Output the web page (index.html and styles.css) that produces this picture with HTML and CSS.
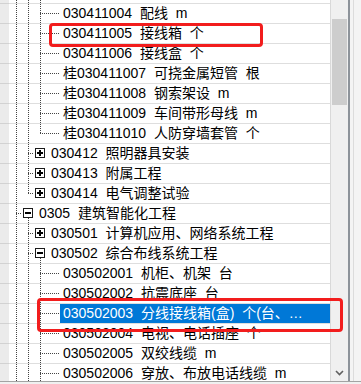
FILE: index.html
```html
<!DOCTYPE html>
<html lang="zh-CN">
<head>
<meta charset="utf-8">
<title>清单树</title>
<link rel="stylesheet" href="styles.css">
</head>
<body>
<div class="frame">
  <div class="tree">
    <div class="list">
      <div class="row"><div class="hdr"></div><div class="cell"><span class="g pipe"></span><span class="g pipe"></span><span class="g tee"></span><span class="n leaf"></span><span class="label"></span></div></div>
      <div class="row"><div class="hdr"></div><div class="cell"><span class="g pipe"></span><span class="g pipe"></span><span class="g tee"></span><span class="n leaf"></span><span class="label">030411004 配线 m</span></div></div>
      <div class="row"><div class="hdr"></div><div class="cell"><span class="g pipe"></span><span class="g pipe"></span><span class="g tee"></span><span class="n leaf"></span><span class="label">030411005 接线箱 个</span></div></div>
      <div class="row"><div class="hdr"></div><div class="cell"><span class="g pipe"></span><span class="g pipe"></span><span class="g tee"></span><span class="n leaf"></span><span class="label">030411006 接线盒 个</span></div></div>
      <div class="row"><div class="hdr"></div><div class="cell"><span class="g pipe"></span><span class="g pipe"></span><span class="g tee"></span><span class="n leaf"></span><span class="label">桂030411007 可挠金属短管 根</span></div></div>
      <div class="row"><div class="hdr"></div><div class="cell"><span class="g pipe"></span><span class="g pipe"></span><span class="g tee"></span><span class="n leaf"></span><span class="label">桂030411008 钢索架设 m</span></div></div>
      <div class="row"><div class="hdr"></div><div class="cell"><span class="g pipe"></span><span class="g pipe"></span><span class="g tee"></span><span class="n leaf"></span><span class="label">桂030411009 车间带形母线 m</span></div></div>
      <div class="row"><div class="hdr"></div><div class="cell"><span class="g pipe"></span><span class="g pipe"></span><span class="g corner"></span><span class="n leaf"></span><span class="label">桂030411010 人防穿墙套管 个</span></div></div>
      <div class="row"><div class="hdr"></div><div class="cell"><span class="g pipe"></span><span class="g tee"></span><span class="n"><svg class="box" viewBox="0 0 10 10" width="10" height="10"><rect x="0.5" y="0.5" width="9" height="9" fill="#fff" stroke="#1a1a1a"/><rect x="2" y="4" width="6" height="2" fill="#000"/><rect x="4" y="2" width="2" height="6" fill="#000"/></svg></span><span class="label">030412 照明器具安装</span></div></div>
      <div class="row"><div class="hdr"></div><div class="cell"><span class="g pipe"></span><span class="g tee"></span><span class="n"><svg class="box" viewBox="0 0 10 10" width="10" height="10"><rect x="0.5" y="0.5" width="9" height="9" fill="#fff" stroke="#1a1a1a"/><rect x="2" y="4" width="6" height="2" fill="#000"/><rect x="4" y="2" width="2" height="6" fill="#000"/></svg></span><span class="label">030413 附属工程</span></div></div>
      <div class="row"><div class="hdr"></div><div class="cell"><span class="g pipe"></span><span class="g corner"></span><span class="n"><svg class="box" viewBox="0 0 10 10" width="10" height="10"><rect x="0.5" y="0.5" width="9" height="9" fill="#fff" stroke="#1a1a1a"/><rect x="2" y="4" width="6" height="2" fill="#000"/><rect x="4" y="2" width="2" height="6" fill="#000"/></svg></span><span class="label">030414 电气调整试验</span></div></div>
      <div class="row"><div class="hdr"></div><div class="cell"><span class="g tee"></span><span class="n open"><svg class="box" viewBox="0 0 10 10" width="10" height="10"><rect x="0.5" y="0.5" width="9" height="9" fill="#fff" stroke="#1a1a1a"/><rect x="2" y="4" width="6" height="2" fill="#000"/></svg></span><span class="label">0305 建筑智能化工程</span></div></div>
      <div class="row"><div class="hdr"></div><div class="cell"><span class="g pipe"></span><span class="g tee"></span><span class="n"><svg class="box" viewBox="0 0 10 10" width="10" height="10"><rect x="0.5" y="0.5" width="9" height="9" fill="#fff" stroke="#1a1a1a"/><rect x="2" y="4" width="6" height="2" fill="#000"/><rect x="4" y="2" width="2" height="6" fill="#000"/></svg></span><span class="label">030501 计算机应用、网络系统工程</span></div></div>
      <div class="row"><div class="hdr"></div><div class="cell"><span class="g pipe"></span><span class="g tee"></span><span class="n open"><svg class="box" viewBox="0 0 10 10" width="10" height="10"><rect x="0.5" y="0.5" width="9" height="9" fill="#fff" stroke="#1a1a1a"/><rect x="2" y="4" width="6" height="2" fill="#000"/></svg></span><span class="label">030502 综合布线系统工程</span></div></div>
      <div class="row"><div class="hdr"></div><div class="cell"><span class="g pipe"></span><span class="g pipe"></span><span class="g tee"></span><span class="n leaf"></span><span class="label">030502001 机柜、机架 台</span></div></div>
      <div class="row"><div class="hdr"></div><div class="cell"><span class="g pipe"></span><span class="g pipe"></span><span class="g tee"></span><span class="n leaf"></span><span class="label">030502002 抗震底座 台</span></div></div>
      <div class="row"><div class="hdr"></div><div class="cell"><span class="g pipe"></span><span class="g pipe"></span><span class="g tee"></span><span class="n leaf"></span><span class="label selected">030502003 分线接线箱(盒) 个(台、套、组)</span></div></div>
      <div class="row"><div class="hdr"></div><div class="cell"><span class="g pipe"></span><span class="g pipe"></span><span class="g tee"></span><span class="n leaf"></span><span class="label">030502004 电视、电话插座 个</span></div></div>
      <div class="row"><div class="hdr"></div><div class="cell"><span class="g pipe"></span><span class="g pipe"></span><span class="g tee"></span><span class="n leaf"></span><span class="label">030502005 双绞线缆 m</span></div></div>
      <div class="row"><div class="hdr"></div><div class="cell"><span class="g pipe"></span><span class="g pipe"></span><span class="g tee"></span><span class="n leaf"></span><span class="label">030502006 穿放、布放电话线缆 m</span></div></div>
    </div>
  </div>
  <div class="vbar">
    <div class="thumb"></div>
    <div class="arrow"><svg viewBox="0 0 9 6" width="9" height="6"><path d="M1 1 L4.5 4.5 L8 1" fill="none" stroke="#606060" stroke-width="1.6"/></svg></div>
  </div>
  <div class="vline"></div>
  <div class="edge"></div>
</div>
<div class="mark mark-a"></div>
<div class="mark mark-b"></div>
</body>
</html>
```
FILE: styles.css
```css
html, body {
  margin: 0;
  padding: 0;
}
body {
  width: 361px;
  height: 384px;
  overflow: hidden;
  position: relative;
  background: #f0f0f0;
  font-family: "Liberation Sans", "Noto Sans CJK SC", sans-serif;
  font-size: 14px;
  color: #000;
}
.frame {
  display: flex;
  height: 382px;
  box-sizing: border-box;
  border-bottom: 1px solid #a3a3a3;
}
.tree {
  width: 331px;
  flex: none;
  box-sizing: border-box;
  border-right: 1px solid #d9d9d9;
  background: #fff;
  overflow: hidden;
}
.list {
  margin-top: -16px;
}
.row {
  display: flex;
  height: 20px;
}
.hdr {
  width: 9px;
  flex: none;
  background: #ebebeb;
  border-bottom: 1px solid #d2d2d2;
}
.cell {
  flex: 1;
  min-width: 0;
  display: flex;
  align-items: stretch;
  padding-left: 1px;
  border-bottom: 1px solid #dedede;
  overflow: hidden;
}
.g {
  width: 12px;
  flex: none;
}
.g.pipe {
  background: repeating-linear-gradient(to bottom, #444 0 1px, transparent 1px 2px) 6px 0 / 1px 100% no-repeat;
}
.g.tee {
  background:
    repeating-linear-gradient(to bottom, #444 0 1px, transparent 1px 2px) 6px 0 / 1px 100% no-repeat,
    repeating-linear-gradient(to right, #444 0 1px, transparent 1px 2px) 6px 9px / 6px 1px no-repeat;
}
.g.corner {
  background:
    repeating-linear-gradient(to bottom, #444 0 1px, transparent 1px 2px) 6px 0 / 1px 10px no-repeat,
    repeating-linear-gradient(to right, #444 0 1px, transparent 1px 2px) 6px 9px / 6px 1px no-repeat;
}
.n {
  width: 14px;
  flex: none;
  display: flex;
  align-items: center;
}
.n.leaf {
  background: repeating-linear-gradient(to right, #444 0 1px, transparent 1px 2px) 0 9px / 14px 1px no-repeat;
}
.n.open {
  background: repeating-linear-gradient(to bottom, #444 0 1px, transparent 1px 2px) 6px 14px / 1px 6px no-repeat;
}
.box {
  display: block;
  margin-left: 1px;
  margin-top: -1px;
}
.label {
  flex: 0 1 auto;
  min-width: 0;
  padding-left: 3px;
  padding-right: 6px;
  line-height: 19px;
  white-space: nowrap;
  overflow: hidden;
  text-overflow: ellipsis;
  word-spacing: 4px;
}
.label.selected {
  flex: 1;
  padding-right: 14px;
  background: #0078d7;
  color: #fff;
}
.vbar {
  width: 17px;
  flex: none;
  display: flex;
  flex-direction: column;
  background: #f0f0f0;
}
.thumb {
  margin: 19px 1px 0 1px;
  height: 86px;
  background: #cdcdcd;
}
.arrow {
  margin-top: auto;
  height: 17px;
  display: flex;
  align-items: center;
  justify-content: center;
}
.arrow svg {
  display: block;
}
.vline {
  width: 2px;
  flex: none;
  background: #8d939a;
}
.edge {
  flex: 1;
  background: #f4f4f4;
  border-left: 3px solid #f4f4f4;
  box-shadow: inset 1px 0 0 #dcdcdc;
}
.mark {
  position: absolute;
  box-sizing: border-box;
  border: 3px solid #f21d1d;
  border-radius: 4px;
}
.mark-a {
  left: 49px;
  top: 23px;
  width: 214px;
  height: 24px;
}
.mark-b {
  left: 37px;
  top: 298px;
  width: 306px;
  height: 34px;
}
```
